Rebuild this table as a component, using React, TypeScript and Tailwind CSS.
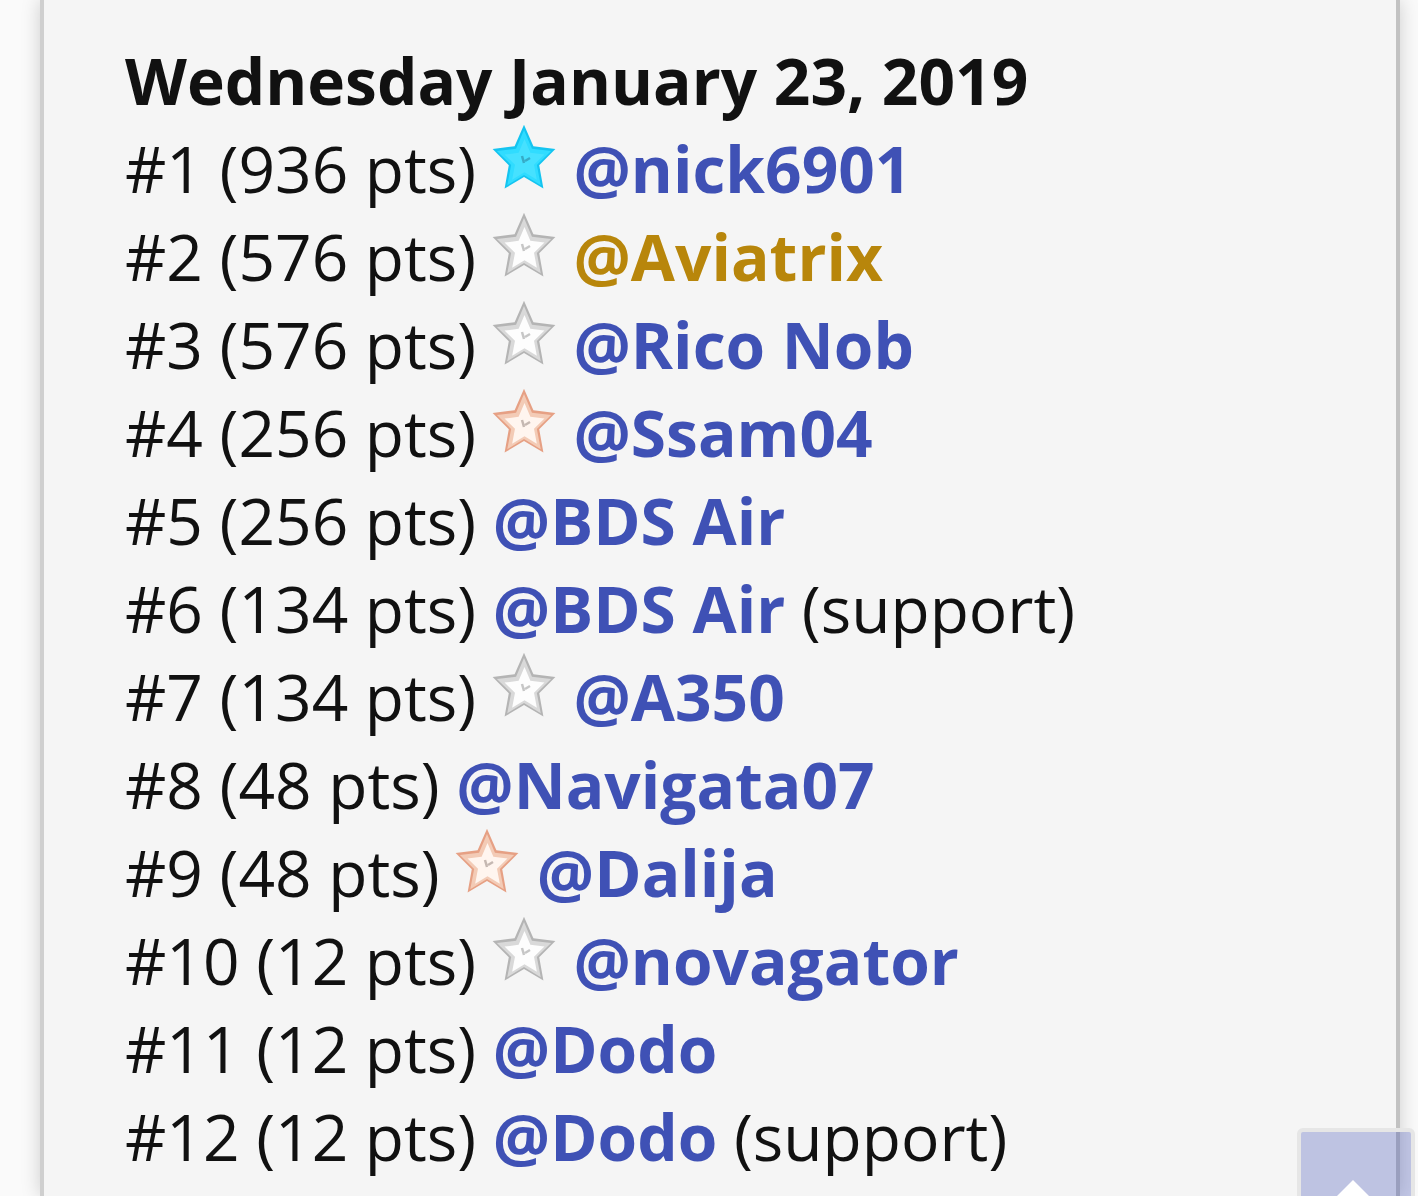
import React from "react";

type StarKind = "cyan" | "silver" | "bronze";

function starPoints(cx: number, cy: number, R: number, r: number) {
  const pts: string[] = [];
  for (let i = 0; i < 10; i++) {
    const rad = i % 2 === 0 ? R : r;
    const a = -Math.PI / 2 + (i * Math.PI) / 5;
    pts.push(`${(cx + rad * Math.cos(a)).toFixed(2)},${(cy + rad * Math.sin(a) * 1.07).toFixed(2)}`);
  }
  return pts.join(" ");
}

function Star({ kind }: { kind: StarKind }) {
  const c =
    kind === "cyan"
      ? { outer: "#14c4f0", fill: "#30dcff", inner: "#55e4ff", mark: "#2a7f99" }
      : kind === "silver"
      ? { outer: "#b4b4b4", fill: "#d9d9d9", inner: "#fdfdfd", mark: "#999999" }
      : { outer: "#e6a084", fill: "#f3cbb6", inner: "#fff5ef", mark: "#958580" };
  const outer = starPoints(32, 36, 33, 16);
  const mid = starPoints(32, 36.5, 28.5, 13.5);
  const inner = starPoints(32.5, 37.5, 21, 10);
  return (
    <span className="relative inline-block h-px w-[64px]">
      <svg width="64" height="66" viewBox="0 0 64 66" className="absolute bottom-[3px] left-[-1px]">
        <polygon points={outer} fill={c.outer} />
        <polygon points={mid} fill={c.fill} />
        <polygon points={inner} fill={c.inner} opacity={kind === "cyan" ? 0.6 : 1} />
        <path d="M30 32 L32 39 M33 37 L38 34" stroke={c.mark} strokeWidth="2.5" fill="none" opacity="0.55" />
      </svg>
    </span>
  );
}

type Row = { rank: number; pts: number; star?: StarKind; name: string; gold?: boolean; support?: boolean };

const rows: Row[] = [
  { rank: 1, pts: 936, star: "cyan", name: "@nick6901" },
  { rank: 2, pts: 576, star: "silver", name: "@Aviatrix", gold: true },
  { rank: 3, pts: 576, star: "silver", name: "@Rico Nob" },
  { rank: 4, pts: 256, star: "bronze", name: "@Ssam04" },
  { rank: 5, pts: 256, name: "@BDS Air" },
  { rank: 6, pts: 134, name: "@BDS Air", support: true },
  { rank: 7, pts: 134, star: "silver", name: "@A350" },
  { rank: 8, pts: 48, name: "@Navigata07" },
  { rank: 9, pts: 48, star: "bronze", name: "@Dalija" },
  { rank: 10, pts: 12, star: "silver", name: "@novagator" },
  { rank: 11, pts: 12, name: "@Dodo" },
  { rank: 12, pts: 12, name: "@Dodo", support: true },
];

export default function App() {
  return (
    <div
      className="relative h-[1196px] w-[1418px] overflow-hidden bg-[#fafafa] text-[#111111]"
      style={{ fontFamily: '"Open Sans", "Noto Sans", sans-serif' }}
    >
      <div className="ml-[40px] h-full w-[1360px] border-x-4 border-l-[#cfcfcf] border-r-[#c2c2c2] bg-[#f5f5f5] shadow-[0_0_18px_rgba(0,0,0,0.18)]">
        <div className="pl-[81px] pt-[37px] text-[64px] leading-[88px] whitespace-nowrap">
          <div className="font-bold">Wednesday January 23, 2019</div>
          {rows.map((r) => (
            <div key={r.rank}>
              #{r.rank} ({r.pts} pts){" "}
              {r.star && (
                <>
                  <Star kind={r.star} />{" "}
                </>
              )}
              <span className={`font-bold ${r.gold ? "text-[#b8860b]" : "text-[#3f51b5]"}`}>{r.name}</span>
              {r.support && " (support)"}
            </div>
          ))}
        </div>
      </div>
      <div className="absolute left-[1297px] top-[1128px] h-[120px] w-[118px] rounded-[6px] border-4 border-[#e6e6e6] bg-[rgba(63,81,181,0.3)]">
        <div className="absolute left-[52px] top-[48px] h-0 w-0 -translate-x-1/2 border-x-[30px] border-b-[30px] border-x-transparent border-b-white" />
      </div>
    </div>
  );
}
